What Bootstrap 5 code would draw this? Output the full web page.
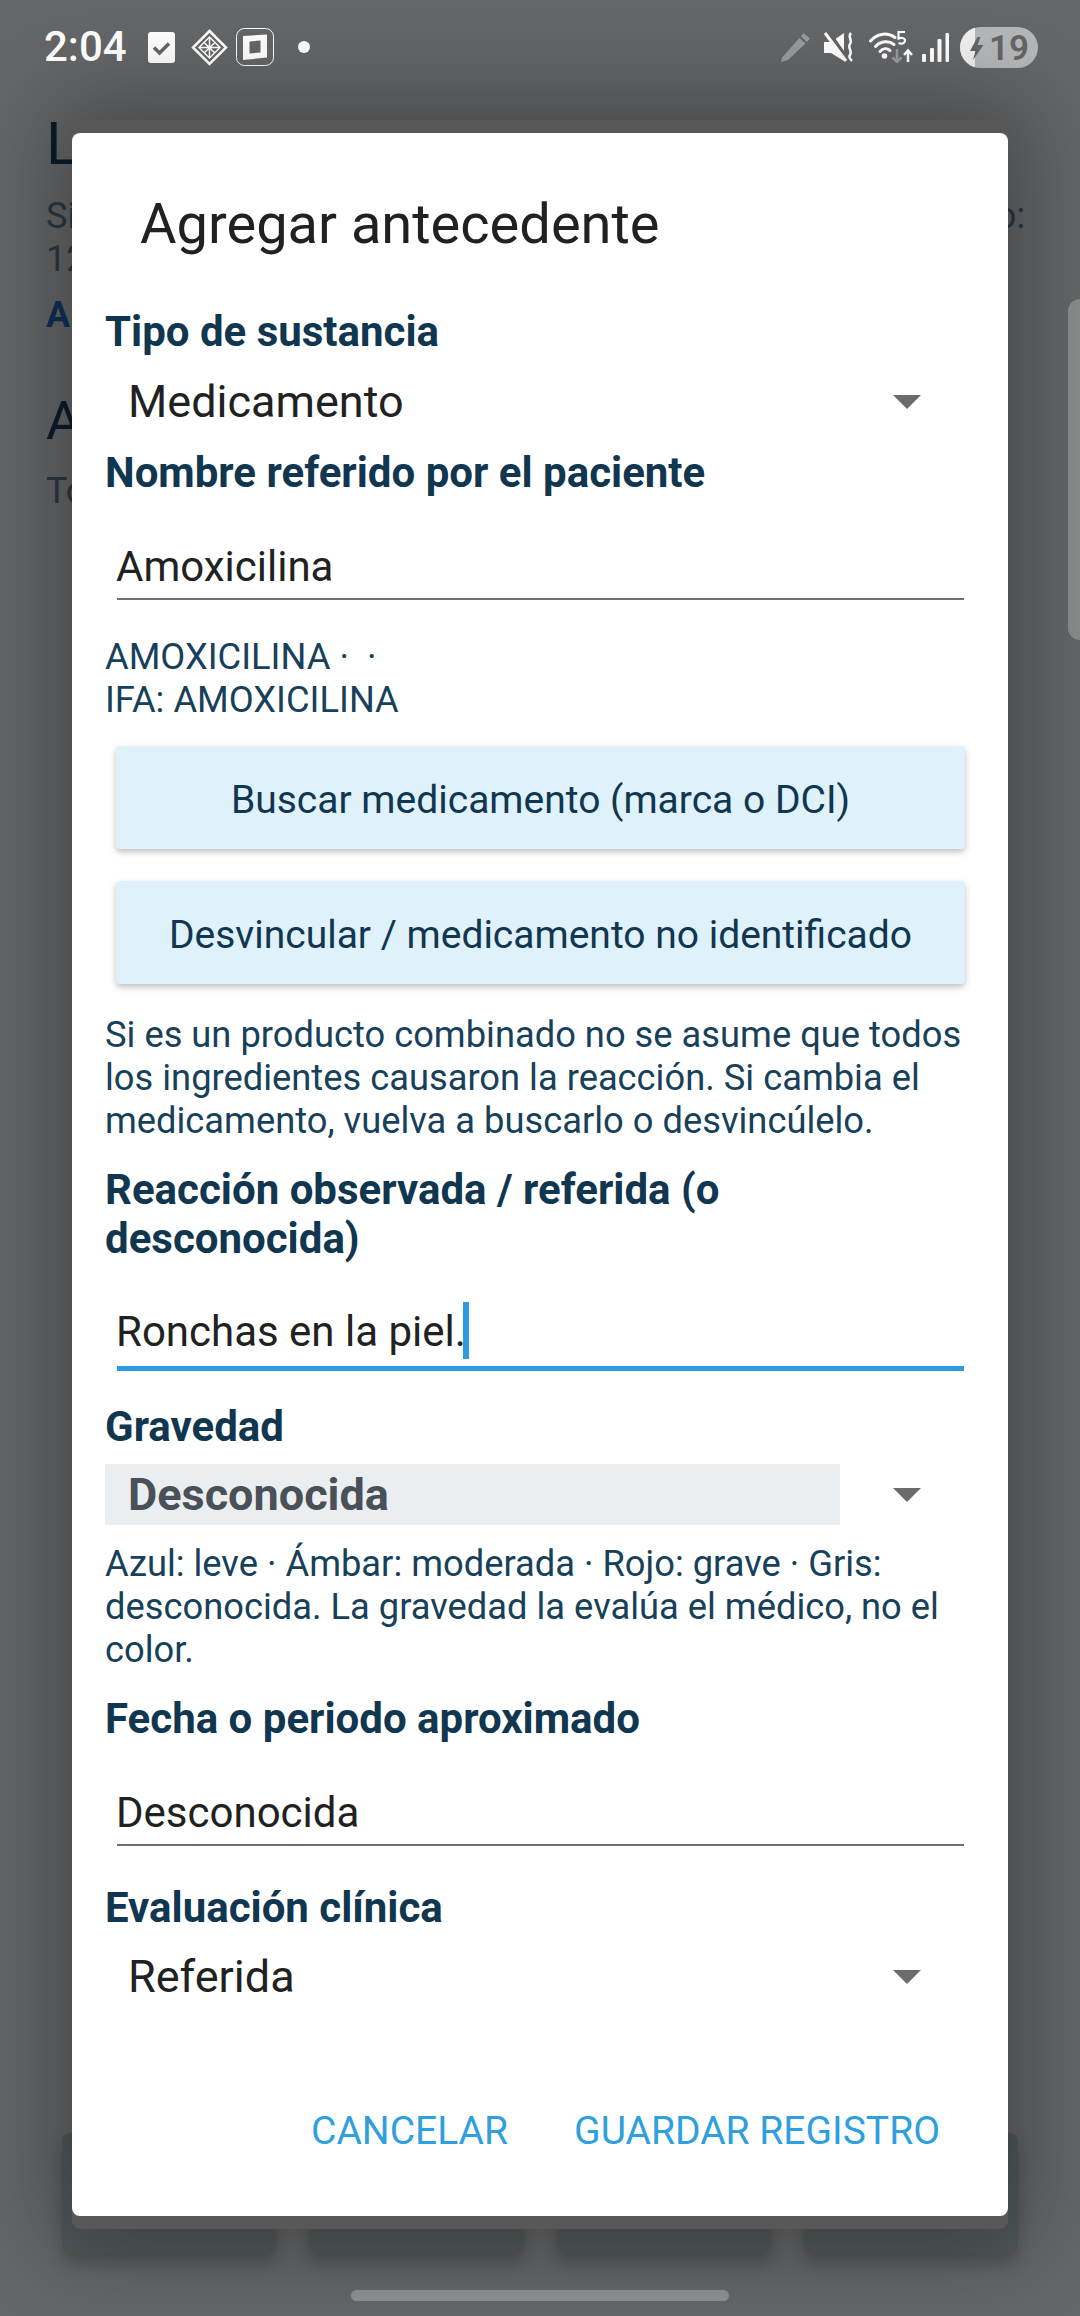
<!DOCTYPE html>
<html lang="es">
<head>
  <meta charset="UTF-8">
  <title>Agregar antecedente</title>
  <link href="https://cdn.jsdelivr.net/npm/bootstrap@5.3.3/dist/css/bootstrap.min.css" rel="stylesheet">
  <style>
    html, body { margin: 0; height: 2316px; overflow: hidden; }
    body { background: #646668; font-family: Roboto, "Liberation Sans", sans-serif; }
    .phone-page { height: 2316px; width: 1080px; position: relative; overflow: hidden; }

    /* status bar */
    .status-row { height: 94px; padding: 0 42px 0 44px; }
    .status-time { color: #fff; font-size: 42px; font-weight: 500; line-height: 1; width: 82px; margin-right: 22px; }
    .status-row svg { display: block; flex: none; }

    /* dimmed screen behind the dialog */
    .back-h1 { color: #0c1c29; font-size: 60px; line-height: 70px; margin-top: 15px; }
    .back-line { color: #2c3842; font-size: 36px; line-height: 43px; }
    .back-first { margin-top: 16px; }
    .back-link { color: #0f3157; font-size: 36px; line-height: 43px; font-weight: 700; margin-top: 13px; }
    .back-h2 { color: #0c1c29; font-size: 54px; line-height: 64px; margin-top: 52px; }
    .back-to { margin-top: 17px; }
    .back-wrap { padding: 0 55px 0 46px; }
    .back-tiles { position: absolute; left: 62px; top: 2133px; width: 956px; gap: 33px; }
    .back-tile { flex: 1; height: 120px; background: #52585b; border-radius: 8px; box-shadow: 0 10px 16px rgba(0,0,0,.2); }
    .back-scroll { position: absolute; left: 1068px; top: 299px; width: 30px; height: 341px; background: #8b8d8d; border-radius: 12px; }
    .home-bar { position: absolute; left: 351px; top: 2290px; width: 378px; height: 11px; background: #8e9091; border-radius: 6px; }

    /* dialog */
    .dlg-frame { position: absolute; left: 72px; top: 120px; width: 936px; height: 2109px; padding: 13px 0; background: #585858; border-radius: 8px; box-shadow: 0 0 90px 20px rgba(0,0,0,.3); }
    .dlg-body { height: 2083px; background: #fff; border-radius: 8px; padding: 0 33px 0 33px; }
    .dlg-title { color: #212121; font-size: 56px; font-weight: 400; line-height: 60px; margin: 61px 0 0 35px; }
    .fld-label { color: #11364f; font-size: 42px; font-weight: 700; line-height: 49px; margin: 0; }
    .fld-select { font-size: 45px; color: #212121; line-height: 50px; padding-left: 23px; height: 58px; }
    .sel-arrow { margin-right: 54px; }
    .fld-input.form-control { background: transparent; border: 0; border-bottom: 2px solid #6f6f6f; border-radius: 0; color: #212121; font-size: 42px; line-height: 48px; padding: 0 0 7px; margin-left: 12px; width: 847px; height: auto; box-shadow: none; text-indent: -1px; }
    .fld-focus.form-control { border-bottom: 5px solid #2d9be0; }
    .text-caret { display: inline-block; width: 6px; height: 57px; background: #2d9be0; vertical-align: middle; margin: -8px 0 0 -3px; }
    .help-text { color: #17405a; font-size: 36.3px; line-height: 43px; margin: 0; }
    .act-btn.btn { display: block; background: #dff1fb; border: 0; border-radius: 4px; color: #11364f; font-size: 39px; line-height: 44px; width: 849px; height: 103px; margin-left: 11px; box-shadow: 0 3px 6px rgba(0,0,0,.25); padding: 5px 0 0; }
    .sev-select { background: #ebeef1; color: #495057; font-weight: 700; width: 735px; height: 61px; }
    .foot-btn.btn { border: 0; padding: 0; color: #2f9fe0; font-size: 39px; line-height: 44px; border-radius: 0; background: none; }
  </style>
</head>
<body>
<div class="phone-page">
  <div class="status-row d-flex align-items-center">
    <span class="status-time">2:04</span>
    <svg width="27" height="31" viewBox="0 0 27 31"><rect width="27" height="31" rx="3" fill="#fff"/><path d="M6 15.500l5.500 5.500L21 11.500" fill="none" stroke="#636567" stroke-width="3.500"/></svg>
    <svg class="ms-3" width="37" height="37" viewBox="0 0 37 37" fill="none" stroke="#fff"><path d="M18.500 2L35 18.500L18.500 35L2 18.500Z" stroke-width="2.500"/><path d="M18.500 8L29 18.500L18.500 29L8 18.500Z" stroke-width="1.500"/><path d="M13 13.500L24 24M24 13.500L13 24M18.500 8V29M8 18.500H29" stroke-width="1.500"/></svg>
    <svg class="ms-2" width="38" height="38" viewBox="0 0 38 38"><rect x=".5" y=".5" width="37" height="37" rx="8" fill="none" stroke="#fff"/><path d="M7 8L31 6.500V29.500L7 32ZM13.500 13.500V25.500L24.500 24.500V12.500Z" fill="#fff" fill-rule="evenodd"/></svg>
    <svg style="margin-left:24px" width="12" height="12" viewBox="0 0 12 12"><circle cx="6" cy="6" r="6" fill="#fff"/></svg>
    <div class="flex-grow-1"></div>
    <svg width="31" height="31" viewBox="0 0 31 31"><path d="M23.500 1L30 6.500L27 10L21 4.500ZM19.500 6L25.500 11.500L8 28L3 29.500L1 30.500L2 25.500Z" fill="#9a9b9c"/></svg>
    <svg style="margin-left:12px" width="31" height="30" viewBox="0 0 31 30"><path d="M1 10H8L21 1V29L8 21H1Z" fill="#fff"/><path d="M4 -1L25 29" stroke="#636567" stroke-width="5"/><path d="M2 1L23 29" stroke="#fff" stroke-width="3"/><path d="M28 1C24 5 30 8 27 12C24 16 30 19 27 23C25 25 27 27 29 29" fill="none" stroke="#fff" stroke-width="2.500"/></svg>
    <svg style="margin-left:15px" width="44" height="32" viewBox="0 0 44 32"><g fill="none" stroke="#fff" stroke-width="3" stroke-linecap="round"><path d="M1.500 10C9 1.500 19 1.500 26 6.500"/><path d="M6.500 15.500C12 9.500 20 9.500 25 13.500"/><path d="M11 20.500C14 17 18 17 21 19.500"/></g><circle cx="15.500" cy="25" r="2.800" fill="#fff"/><path d="M36 1H29.500V7.500C33 6 37.500 7.500 35.500 11C34.500 13 31.500 13 29.500 12" fill="none" stroke="#fff" stroke-width="2.200"/><path d="M39 31V20M35 24L39 19.500L43 24" fill="none" stroke="#fff" stroke-width="2.500"/><path d="M28 18V31M23.500 26.500L28 31L32.500 26.500" fill="none" stroke="#9a9b9c" stroke-width="2.500"/></svg>
    <svg style="margin-left:9px" width="27" height="29" viewBox="0 0 27 29"><g fill="#fff"><rect x="0" y="21" width="4" height="8" rx="1"/><rect x="8" y="15" width="4" height="14" rx="1"/><rect x="15.500" y="6" width="4" height="23" rx="1"/></g><rect x="23.500" y="0" width="3.500" height="29" rx="1" fill="#fff"/></svg>
    <svg style="margin-left:11px" width="78" height="41" viewBox="0 0 78 41"><defs><clipPath id="pillClip"><rect width="78" height="41" rx="20.500"/></clipPath></defs><g clip-path="url(#pillClip)"><rect width="78" height="41" fill="#b6b7b8"/><rect width="15" height="41" fill="#f0f0f0"/></g><path d="M17.500 10L10 24H15.500L13 33L23.500 18H17.500L20.500 10Z" fill="#636567"/><text x="29" y="33" font-family="Roboto, sans-serif" font-size="35" font-weight="600" fill="#636567">19</text></svg>
  </div>

  <div class="back-wrap">
    <div class="back-h1">L</div>
    <div class="d-flex justify-content-between back-line back-first"><span>Si</span><span>o:</span></div>
    <div class="back-line">12</div>
    <div class="back-link">A</div>
    <div class="back-h2">A</div>
    <div class="back-line back-to">To</div>
  </div>

  <div class="back-tiles d-flex">
    <div class="back-tile"></div>
    <div class="back-tile"></div>
    <div class="back-tile"></div>
    <div class="back-tile"></div>
  </div>
  <div class="back-scroll"></div>
  <div class="home-bar"></div>

  <div class="dlg-frame">
    <div class="dlg-body d-flex flex-column">
      <h1 class="dlg-title">Agregar antecedente</h1>

      <p class="fld-label" style="margin-top:53px">Tipo de sustancia</p>
      <div class="fld-select d-flex justify-content-between align-items-center" style="margin-top:17px">
        <span>Medicamento</span>
        <svg class="sel-arrow" width="28" height="14" viewBox="0 0 28 14"><path d="M0 0H28L14 14Z" fill="#6b6b6b"/></svg>
      </div>

      <p class="fld-label" style="margin-top:17px">Nombre referido por el paciente</p>
      <div class="fld-input form-control" style="margin-top:46px">Amoxicilina</div>
      <p class="help-text" style="margin-top:35px">AMOXICILINA ·&nbsp; ·<br>IFA: AMOXICILINA</p>

      <button type="button" class="act-btn btn" style="margin-top:25px">Buscar medicamento (marca o DCI)</button>
      <button type="button" class="act-btn btn" style="margin-top:32px">Desvincular / medicamento no identificado</button>

      <p class="help-text" style="margin-top:29px">Si es un producto combinado no se asume que todos los ingredientes causaron la reacción. Si cambia el medicamento, vuelva a buscarlo o desvincúlelo.</p>

      <p class="fld-label" style="margin-top:23px">Reacción observada / referida (o desconocida)</p>
      <div class="fld-input fld-focus form-control" style="margin-top:45px">Ronchas en la piel.<span class="text-caret"></span></div>

      <p class="fld-label" style="margin-top:31px">Gravedad</p>
      <div class="d-flex align-items-center justify-content-between" style="margin-top:13px">
        <div class="fld-select sev-select d-flex align-items-center">Desconocida</div>
        <svg class="sel-arrow" width="28" height="14" viewBox="0 0 28 14"><path d="M0 0H28L14 14Z" fill="#6b6b6b"/></svg>
      </div>
      <p class="help-text" style="margin-top:17px">Azul: leve · Ámbar: moderada · Rojo: grave · Gris: desconocida. La gravedad la evalúa el médico, no el color.</p>

      <p class="fld-label" style="margin-top:23px">Fecha o periodo aproximado</p>
      <div class="fld-input form-control" style="margin-top:46px">Desconocida</div>

      <p class="fld-label" style="margin-top:37px">Evaluación clínica</p>
      <div class="fld-select d-flex justify-content-between align-items-center" style="margin-top:16px">
        <span>Referida</span>
        <svg class="sel-arrow" width="28" height="14" viewBox="0 0 28 14"><path d="M0 0H28L14 14Z" fill="#6b6b6b"/></svg>
      </div>

      <div class="d-flex justify-content-end" style="margin-top:103px;padding-right:35px;gap:66px">
        <button type="button" class="foot-btn btn">CANCELAR</button>
        <button type="button" class="foot-btn btn">GUARDAR REGISTRO</button>
      </div>
    </div>
  </div>
</div>
</body>
</html>
